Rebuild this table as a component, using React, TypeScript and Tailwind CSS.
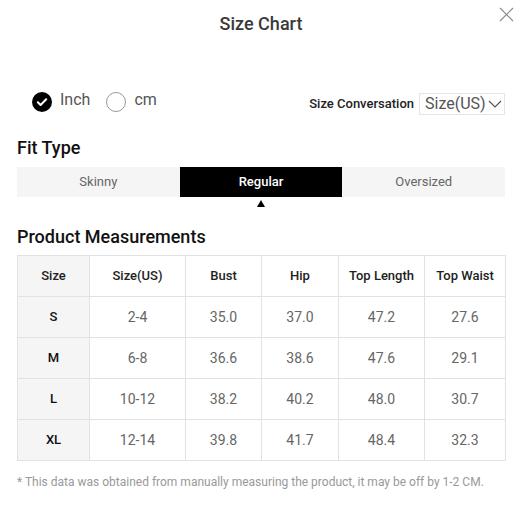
import React, { useState } from 'react';

const columns = ['Size', 'Size(US)', 'Bust', 'Hip', 'Top Length', 'Top Waist'];

const rows = [
  ['S', '2-4', '35.0', '37.0', '47.2', '27.6'],
  ['M', '6-8', '36.6', '38.6', '47.6', '29.1'],
  ['L', '10-12', '38.2', '40.2', '48.0', '30.7'],
  ['XL', '12-14', '39.8', '41.7', '48.4', '32.3'],
];

const colWidths = ['w-[72px]', 'w-[96px]', 'w-[76px]', 'w-[77px]', 'w-[86px]', 'w-[81px]'];

const fitTypes = ['Skinny', 'Regular', 'Oversized'];

const App: React.FC = () => {
  const [unit, setUnit] = useState<'inch' | 'cm'>('inch');
  const [fit, setFit] = useState('Regular');

  return (
    <div className="relative w-[527px] h-[507px] bg-white pl-[17px] pr-[22px] font-['Roboto',sans-serif]">
      {/* Header */}
      <div className="pt-[12px] h-[84px] text-center">
        <h2 className="text-[18px] leading-[24px] font-medium text-[#3a3a3a]">Size Chart</h2>
      </div>
      <button className="absolute right-[13px] top-[7px] text-[#888]">
        <svg width="15" height="15" viewBox="0 0 15 15" fill="none" stroke="currentColor" strokeWidth="1.1">
          <path d="M1 1L14 14M14 1L1 14" />
        </svg>
      </button>

      {/* Unit + size conversion */}
      <div className="flex items-center justify-between h-[34px]">
        <div className="flex items-center pl-[15px] pt-[2px]">
          <button className="flex items-center gap-[8px]" onClick={() => setUnit('inch')}>
            {unit === 'inch' ? (
              <svg width="20" height="20" viewBox="0 0 20 20">
                <circle cx="10" cy="10" r="10" fill="#000" />
                <path d="M5.8 10.3L8.6 13L14.2 7.3" fill="none" stroke="#fff" strokeWidth="2" strokeLinecap="round" strokeLinejoin="round" />
              </svg>
            ) : (
              <span className="w-[20px] h-[20px] rounded-full border border-[#999]" />
            )}
            <span className="text-[16px] leading-none text-[#555] -mt-[4px]">Inch</span>
          </button>
          <button className="flex items-center gap-[8px] ml-[16px]" onClick={() => setUnit('cm')}>
            {unit === 'cm' ? (
              <svg width="20" height="20" viewBox="0 0 20 20">
                <circle cx="10" cy="10" r="10" fill="#000" />
                <path d="M5.8 10.3L8.6 13L14.2 7.3" fill="none" stroke="#fff" strokeWidth="2" strokeLinecap="round" strokeLinejoin="round" />
              </svg>
            ) : (
              <span className="w-[20px] h-[20px] rounded-full border border-[#999]" />
            )}
            <span className="text-[16px] leading-none text-[#555] -mt-[4px]">cm</span>
          </button>
        </div>
        <div className="flex items-center pt-[6px]">
          <span className="text-[13px] font-medium text-[#222] mr-[5px]">Size Conversation</span>
          <div className="flex items-center h-[22px] w-[86px] border border-[#e5e5e5] pl-[5px]">
            <span className="text-[16px] leading-none text-[#555]">Size(US)</span>
            <svg width="14" height="8" viewBox="0 0 14 8" className="ml-[2px]" fill="none" stroke="#555" strokeWidth="1.2">
              <path d="M1 1L7 7L13 1" />
            </svg>
          </div>
        </div>
      </div>

      {/* Fit type */}
      <h3 className="mt-[18px] text-[18px] leading-[24px] font-medium text-[#111]">Fit Type</h3>
      <div className="mt-[7px] flex h-[30px] bg-[#f5f5f5]">
        {fitTypes.map((t) => (
          <button
            key={t}
            onClick={() => setFit(t)}
            className={
              fit === t
                ? 'relative flex-1 bg-black text-white text-[13px] font-medium'
                : 'relative flex-1 text-[#666] text-[13px]'
            }
          >
            {t}
            {fit === t && (
              <span className="absolute left-1/2 -translate-x-1/2 top-[33px] w-0 h-0 border-l-[4px] border-r-[4px] border-b-[7px] border-l-transparent border-r-transparent border-b-black" />
            )}
          </button>
        ))}
      </div>

      {/* Product measurements */}
      <h3 className="mt-[28px] text-[18px] leading-[24px] font-medium text-[#111]">Product Measurements</h3>
      <table className="mt-[6px] w-[488px] border-collapse table-fixed">
        <thead>
          <tr className="h-[41px]">
            {columns.map((c, i) => (
              <th
                key={c}
                className={`${colWidths[i]} border border-[#e2e2e2] text-[13px] font-medium text-[#222] ${i === 0 ? 'bg-[#f5f5f5]' : ''}`}
              >
                {c}
              </th>
            ))}
          </tr>
        </thead>
        <tbody>
          {rows.map((r) => (
            <tr key={r[0]} className="h-[41px]">
              {r.map((v, i) => (
                <td
                  key={i}
                  className={
                    i === 0
                      ? 'border border-[#e2e2e2] bg-[#f5f5f5] text-center text-[13px] font-medium text-[#111]'
                      : 'border border-[#e2e2e2] text-center text-[14px] text-[#666]'
                  }
                >
                  {v}
                </td>
              ))}
            </tr>
          ))}
        </tbody>
      </table>

      <p className="mt-[13px] text-[12px] leading-[16px] text-[#999]">
        * This data was obtained from manually measuring the product, it may be off by 1-2 CM.
      </p>
    </div>
  );
};

export default App;
